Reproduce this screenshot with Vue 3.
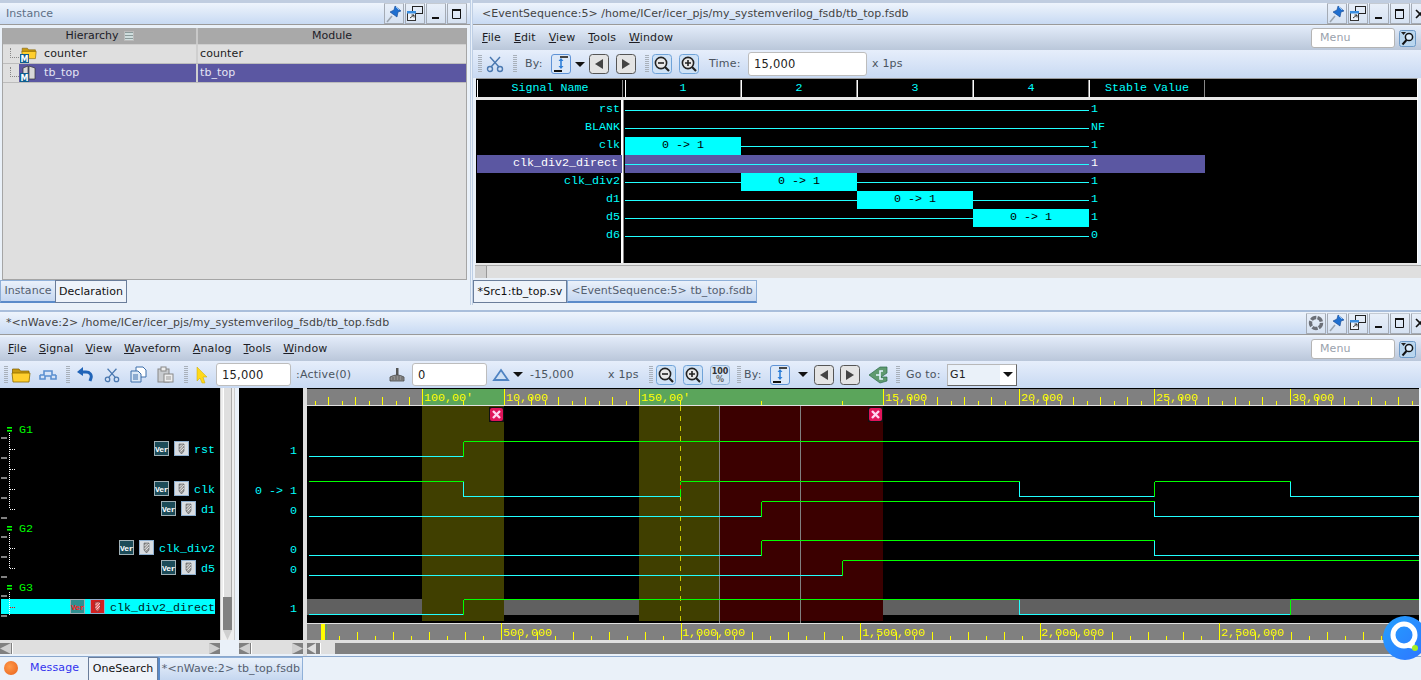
<script setup>
const esRows = [
  { name: 'rst', val: '1', box: -1 },
  { name: 'BLANK', val: 'NF', box: -1 },
  { name: 'clk', val: '1', box: 0 },
  { name: 'clk_div2_direct', val: '1', box: -1, sel: true },
  { name: 'clk_div2', val: '1', box: 1 },
  { name: 'd1', val: '1', box: 2 },
  { name: 'd5', val: '1', box: 3 },
  { name: 'd6', val: '0', box: -1 },
]
const segs = [[-1, 422, 314.5], [504, 639, 517.5], [883, 1019, 896.5], [1019, 1154, 1032.5], [1154, 1290, 1167.5], [1290, 1419, 1303.5]]
const topTicks = []
segs.forEach(([a, b, s]) => {
  let i = 1
  for (let x = s; x < b - 3; x += 13.55, i++) topTicks.push({ x: Math.round(x) + 0.5, h: i % 2 ? 4 : 8 })
})
;[463, 761, 842, 680].forEach(x => topTicks.push({ x: x + 0.5, h: 4 }))
const topMajors = [422, 504, 639, 883, 1019, 1154, 1290]
const topLabels = [[424, "100,00'"], [506, '10,000'], [641, "150,00'"], [885, '15,000'], [1021, '20,000'], [1156, '25,000'], [1292, '30,000']]
const botTicks = []
for (let i = 1; i < 61; i++) {
  const x = Math.round(321.4 + 17.96 * i) + 0.5
  botTicks.push({ x, h: i % 10 === 0 ? 17 : i % 2 ? 4 : 8 })
}
const botLabels = [[503, '500,000'], [682, '1,000,000'], [862, '1,500,000'], [1041, '2,000,000'], [1221, '2,500,000']]
const waves = [
  { hi: 442, lo: 457, start: 0, edges: [463] },
  { hi: 482, lo: 497, start: 1, edges: [463, 680, 1019, 1154, 1290] },
  { hi: 502, lo: 517, start: 0, edges: [761, 1154] },
  { hi: 541, lo: 556, start: 0, edges: [761, 1154] },
  { hi: 561, lo: 576, start: 0, edges: [842] },
  { hi: 600, lo: 615, start: 0, edges: [463, 1019, 1290] },
]
const waveLines = []
waves.forEach(w => {
  let v = w.start
  let x = 309
  ;[...w.edges, 1419].forEach((e, i, arr) => {
    const y = (v ? w.hi : w.lo) + 0.5
    waveLines.push({ x1: x, y1: y, x2: e + 0.5, y2: y, c: v ? '#00ff00' : '#22ffff' })
    if (i < arr.length - 1) {
      waveLines.push({ x1: e + 0.5, y1: w.hi + 0.5, x2: e + 0.5, y2: w.lo + 0.5, c: v ? '#22ffff' : '#00ff00' })
    }
    v = 1 - v
    x = e + 0.5
  })
})
const sideTicks = [438, 458, 478, 498, 518, 537, 557, 577, 596, 616]
const groups = [
  { name: 'G1', y: 430, top: 434, bot: 510, br: [450, 470, 490, 510] },
  { name: 'G2', y: 529, top: 534, bot: 569, br: [549, 569] },
  { name: 'G3', y: 588, top: 593, bot: 616, br: [] },
]
const sigs = [
  { name: 'rst', x: 194, y: 442 },
  { name: 'clk', x: 194, y: 482 },
  { name: 'd1', x: 201, y: 502 },
  { name: 'clk_div2', x: 159, y: 541 },
  { name: 'd5', x: 201, y: 561 },
  { name: 'clk_div2_direct', x: 110, y: 600, sel: true },
]
const vals = [[451, '1'], [491, '0 -> 1'], [511, '0'], [550, '0'], [570, '0'], [609, '1']]
const menuTop = [['F', 'ile'], ['E', 'dit'], ['V', 'iew'], ['T', 'ools'], ['W', 'indow']]
const menuBot = [['F', 'ile'], ['S', 'ignal'], ['V', 'iew'], ['W', 'aveform'], ['A', 'nalog'], ['T', 'ools'], ['W', 'indow']]
</script>

<template>
  <div class="app">
    <svg class="defs" aria-hidden="true">
      <defs>
        <symbol id="pin" viewBox="0 0 20 20">
          <path d="M3 18 L8 12" stroke="#9aa3ad" stroke-width="1.5" fill="none" />
          <path d="M11 2 L17 7 L14 8 L13 13 L6 8 L10 6 Z" fill="#1f6fd0" stroke="#14478f" stroke-width=".6" />
          <path d="M12 3 L15 6" stroke="#8fc0f5" stroke-width="1" />
        </symbol>
        <symbol id="float" viewBox="0 0 20 20">
          <rect x="7.5" y="2.5" width="10" height="7" fill="none" stroke="#222" />
          <rect x="2.5" y="7.5" width="8" height="9" fill="#eef3fa" stroke="#333" />
          <rect x="2" y="7" width="9" height="2.5" fill="#3a8ee0" />
          <path d="M5 14 L9 11 M6.5 11 H9 V13.5" stroke="#333" fill="none" />
        </symbol>
        <symbol id="min" viewBox="0 0 20 20"><rect x="6" y="13" width="7" height="2" fill="#111" /></symbol>
        <symbol id="max" viewBox="0 0 20 20"><path d="M5.5 6.5 H13.5 V14.5 H5.5 Z M5 6.5 H14" fill="none" stroke="#111" /><rect x="5" y="5" width="9" height="2" fill="#111" /></symbol>
        <symbol id="close" viewBox="0 0 20 20"><path d="M5 6 L13 14 M13 6 L5 14" stroke="#111" stroke-width="1.6" /></symbol>
        <symbol id="gear" viewBox="0 0 20 20">
          <circle cx="10" cy="10" r="5.5" fill="none" stroke="#6c7078" stroke-width="3.4" stroke-dasharray="5.5 1.2" />
        </symbol>
        <symbol id="search" viewBox="0 0 17 17">
          <rect x=".5" y=".5" width="16" height="16" rx="2" fill="#b9d6ee" stroke="#6d9ac7" />
          <path d="M2 2 H7 L4.5 5 Z" fill="#222" />
          <circle cx="10" cy="7" r="3.6" fill="#dff0ff" stroke="#111" stroke-width="1.5" />
          <path d="M7.5 10 L3.5 14.5" stroke="#111" stroke-width="2" />
        </symbol>
        <symbol id="scissors" viewBox="0 0 18 18">
          <path d="M4 2 L13 12 M14 2 L5 12" stroke="#4a78b0" stroke-width="1.4" fill="none" />
          <circle cx="4" cy="14" r="2.5" fill="none" stroke="#4a78b0" stroke-width="1.4" />
          <circle cx="14" cy="14" r="2.5" fill="none" stroke="#4a78b0" stroke-width="1.4" />
        </symbol>
        <symbol id="by" viewBox="0 0 20 20">
          <rect x=".5" y=".5" width="19" height="19" rx="2.5" fill="#dce8f8" stroke="#5f93d6" />
          <rect x="9" y="2" width="8" height="2" fill="#444" />
          <rect x="3" y="16" width="8" height="2" fill="#111" />
          <path d="M10 5 V14" stroke="#2f7fd8" stroke-width="1.6" />
          <path d="M7.5 7 L10 4 L12.5 7 Z M7.5 12 L10 15 L12.5 12 Z" fill="#2f7fd8" />
        </symbol>
        <symbol id="prev" viewBox="0 0 20 20">
          <rect x=".5" y=".5" width="19" height="19" rx="3" fill="#e4e4e4" stroke="#555" />
          <path d="M14 5 V15 L6 10 Z" fill="#444" />
        </symbol>
        <symbol id="next" viewBox="0 0 20 20">
          <rect x=".5" y=".5" width="19" height="19" rx="3" fill="#e4e4e4" stroke="#555" />
          <path d="M6 5 V15 L14 10 Z" fill="#444" />
        </symbol>
        <symbol id="zoomout" viewBox="0 0 20 20">
          <rect x=".5" y=".5" width="19" height="19" rx="3" fill="#cfe2f6" stroke="#6fa3d8" />
          <circle cx="9" cy="9" r="5.6" fill="#e9e9e9" stroke="#222" stroke-width="1.6" />
          <path d="M6 9 H12" stroke="#222" stroke-width="1.6" />
          <path d="M13 13 L17 17" stroke="#222" stroke-width="2.2" />
        </symbol>
        <symbol id="zoomin" viewBox="0 0 20 20">
          <rect x=".5" y=".5" width="19" height="19" rx="3" fill="#cfe2f6" stroke="#6fa3d8" />
          <circle cx="9" cy="9" r="5.6" fill="#e9e9e9" stroke="#222" stroke-width="1.6" />
          <path d="M6 9 H12 M9 6 V12" stroke="#222" stroke-width="1.6" />
          <path d="M13 13 L17 17" stroke="#222" stroke-width="2.2" />
        </symbol>
        <symbol id="folder" viewBox="0 0 20 20">
          <path d="M1.5 6 V4 H8 L9.5 6 H18 V9 H1.5 Z" fill="#c99a10" stroke="#7a5a00" stroke-width=".7" />
          <path d="M1 8 H19 L18 17 H2 Z" fill="#ffcf2e" stroke="#8a6a00" stroke-width=".8" />
        </symbol>
        <symbol id="cable" viewBox="0 0 18 18">
          <path d="M1 9 H5 V5 H13 V9 H17 M1 9 V13 H6 V10 H12 V13 H17 V9" fill="none" stroke="#5a8fd0" stroke-width="1.6" />
        </symbol>
        <symbol id="undo" viewBox="0 0 16 16">
          <path d="M3 5 H9 C13 5 15 8 14 11 L13 14" fill="none" stroke="#2064b8" stroke-width="3" />
          <path d="M6 0 L0 5 L6 9 Z" fill="#2064b8" />
        </symbol>
        <symbol id="copy" viewBox="0 0 17 17">
          <path d="M6 1 H13 L16 4 V11 H6 Z" fill="#fff" stroke="#3d6faa" />
          <path d="M1 5 H8 L11 8 V16 H1 Z" fill="#dbe8f6" stroke="#3d6faa" />
          <path d="M3 9 H8 M3 11 H8 M3 13 H8" stroke="#3d6faa" />
        </symbol>
        <symbol id="paste" viewBox="0 0 17 17">
          <rect x="1" y="3" width="11" height="13" fill="#c9ccd0" stroke="#888" />
          <rect x="4" y="1" width="5" height="4" fill="#eee" stroke="#888" />
          <rect x="7" y="8" width="9" height="8" fill="#eee" stroke="#888" />
          <path d="M9 11 H14 M9 13 H14" stroke="#999" />
        </symbol>
        <symbol id="pointer" viewBox="0 0 12 18">
          <path d="M1 1 L11 11 L7 11 L9 17 L6 17 L4 12 L1 15 Z" fill="#ffd91a" stroke="#c9a800" stroke-width=".5" />
        </symbol>
        <symbol id="hand" viewBox="0 0 16 16">
          <rect x="7" y="1" width="2.5" height="7" fill="#555" />
          <path d="M1 14 V10 Q8 6 15 10 V14 Z" fill="#8f8f8f" stroke="#444" stroke-width=".8" />
          <path d="M4 10 V13 M7 9 V13 M10 9 V13 M13 10 V13" stroke="#444" stroke-width=".6" />
        </symbol>
        <symbol id="tri" viewBox="0 0 18 14">
          <path d="M9 2 L16 12 H2 Z" fill="#cfe0f4" stroke="#4f83c2" stroke-width="1.8" />
        </symbol>
        <symbol id="pct" viewBox="0 0 20 20">
          <rect x=".5" y=".5" width="19" height="19" rx="3" fill="#d3e3f5" stroke="#8fb2d8" />
          <text x="10" y="9" text-anchor="middle" font-size="8" font-weight="700" fill="#333" font-family="'DejaVu Sans',sans-serif">100</text>
          <text x="10" y="17" text-anchor="middle" font-size="8" font-weight="700" fill="#666" font-family="'DejaVu Sans',sans-serif">%</text>
        </symbol>
        <symbol id="chev" viewBox="0 0 20 20">
          <path d="M1 10 L12 2 L19 2 L19 8 L13 12 L19 12 L19 16 L12 18 Z" fill="#5f9a6f" stroke="#2c6b4a" stroke-width=".7" />
          <path d="M8 10 H12 V6 H15 M12 10 V14 H15" stroke="#e4f4ff" stroke-width="1.6" fill="none" />
        </symbol>
      </defs>
    </svg>

    <div class="top">
      <section class="left">
        <div class="title">
          <span class="title-text muted">Instance</span>
          <div class="wbtns">
            <button class="wbtn"><svg class="i20"><use href="#pin" /></svg></button>
            <button class="wbtn"><svg class="i20"><use href="#float" /></svg></button>
            <button class="wbtn"><svg class="i20"><use href="#min" /></svg></button>
            <button class="wbtn"><svg class="i20"><use href="#max" /></svg></button>
          </div>
        </div>
        <div class="tree">
          <div class="tree-head">
            <div class="th th1">Hierarchy <span class="th-ico"></span></div>
            <div class="th th2">Module</div>
          </div>
          <div class="tr">
            <div class="td td1">
              <span class="dots"></span>
              <svg class="mico" viewBox="0 0 17 17">
                <use href="#folder" x="1" y="-1" width="16" height="16" />
                <rect x="0" y="8" width="9" height="9" fill="#0f5e8f" />
                <text x="4.5" y="15.5" text-anchor="middle" font-size="8" font-weight="700" fill="#fff" font-family="'DejaVu Sans',sans-serif">M</text>
              </svg>
              <span class="tname">counter</span>
            </div>
            <div class="td td2">counter</div>
          </div>
          <div class="tr tr-sel">
            <div class="td td1">
              <span class="dots"></span>
              <span class="sel-fill">
                <svg class="mico" viewBox="0 0 17 17">
                  <path d="M3 3 L8 1 L8 14 L3 15 Z M9 1 L15 3 V14 L9 14 Z" fill="#d8d8d8" stroke="#333" stroke-width=".7" />
                  <rect x="0" y="8" width="9" height="9" fill="#0f5e8f" />
                  <text x="4.5" y="15.5" text-anchor="middle" font-size="8" font-weight="700" fill="#fff" font-family="'DejaVu Sans',sans-serif">M</text>
                </svg>
                <span class="tname">tb_top</span>
              </span>
            </div>
            <div class="td td2">tb_top</div>
          </div>
        </div>
        <div class="tabs">
          <span class="tab tab-blue tab-inst">Instance</span>
          <span class="tab tab-white tab-decl">Declaration</span>
        </div>
      </section>

      <div class="vsep"></div>

      <section class="right">
        <div class="title">
          <span class="title-text title-path">&lt;EventSequence:5&gt; /home/ICer/icer_pjs/my_systemverilog_fsdb/tb_top.fsdb</span>
          <div class="wbtns">
            <button class="wbtn"><svg class="i20"><use href="#pin" /></svg></button>
            <button class="wbtn"><svg class="i20"><use href="#float" /></svg></button>
            <button class="wbtn"><svg class="i20"><use href="#min" /></svg></button>
            <button class="wbtn"><svg class="i20"><use href="#max" /></svg></button>
            <button class="wbtn wbtn-cut"><svg class="i20"><use href="#close" /></svg></button>
          </div>
        </div>
        <div class="menu menu-top">
          <span v-for="m in menuTop" :key="m[1]" class="mi"><u>{{ m[0] }}</u>{{ m[1] }}</span>
          <span class="menu-search">Menu</span>
          <svg class="i17 search-ico"><use href="#search" /></svg>
        </div>
        <div class="tool">
          <span class="grip ml5"></span>
          <svg class="i18 ml4"><use href="#scissors" /></svg>
          <span class="grip ml9"></span>
          <span class="tl ml8 w26">By:</span>
          <svg class="i20"><use href="#by" /></svg>
          <span class="drop ml4"></span>
          <svg class="i20 ml4"><use href="#prev" /></svg>
          <svg class="i20 ml7"><use href="#next" /></svg>
          <span class="grip ml9"></span>
          <svg class="i20 ml3"><use href="#zoomout" /></svg>
          <svg class="i20 ml7"><use href="#zoomin" /></svg>
          <span class="tl ml10 w39">Time:</span>
          <span class="inp w119">15,000</span>
          <span class="tl ml5">x 1ps</span>
        </div>
        <div class="es">
          <div class="es-head">
            <span class="hc hc-name">Signal Name</span>
            <span class="hc hc-num">1</span>
            <span class="hc hc-num">2</span>
            <span class="hc hc-num">3</span>
            <span class="hc hc-num">4</span>
            <span class="hc hc-num">Stable Value</span>
          </div>
          <div class="es-body">
            <div v-for="r in esRows" :key="r.name" class="es-row" :class="{ sel: r.sel }">
              <span class="es-name">{{ r.name }}</span>
              <span class="es-wave">
                <span v-for="c in 4" :key="c" class="es-cell" :class="{ box: r.box === c - 1 }">
                  <template v-if="r.box === c - 1">0 -&gt; 1</template>
                </span>
              </span>
              <span class="es-val">{{ r.val }}</span>
            </div>
          </div>
        </div>
        <div class="hbar"><span class="harrow"></span></div>
        <div class="tabs tabs-right">
          <span class="tab tab-white tab-src">*Src1:tb_top.sv</span>
          <span class="tab tab-blue tab-es">&lt;EventSequence:5&gt; tb_top.fsdb</span>
        </div>
      </section>
    </div>

    <div class="hsep"></div>

    <section class="bottom">
      <div class="title title-b">
        <span class="title-text title-b-text">*&lt;nWave:2&gt; /home/ICer/icer_pjs/my_systemverilog_fsdb/tb_top.fsdb</span>
        <div class="wbtns">
          <button class="wbtn"><svg class="i20"><use href="#gear" /></svg></button>
          <button class="wbtn"><svg class="i20"><use href="#pin" /></svg></button>
          <button class="wbtn"><svg class="i20"><use href="#float" /></svg></button>
          <button class="wbtn"><svg class="i20"><use href="#min" /></svg></button>
          <button class="wbtn"><svg class="i20"><use href="#max" /></svg></button>
          <button class="wbtn wbtn-cut"><svg class="i20"><use href="#close" /></svg></button>
        </div>
      </div>
      <div class="menu menu-bot">
        <span v-for="m in menuBot" :key="m[1]" class="mi"><u>{{ m[0] }}</u>{{ m[1] }}</span>
        <span class="menu-search">Menu</span>
        <svg class="i17 search-ico"><use href="#search" /></svg>
      </div>
      <div class="tool tool-b">
        <span class="grip ml4"></span>
        <svg class="i20 ml3"><use href="#folder" /></svg>
        <svg class="i18 ml8"><use href="#cable" /></svg>
        <span class="grip ml9"></span>
        <svg class="i16 ml7"><use href="#undo" /></svg>
        <svg class="i16 ml11"><use href="#scissors" /></svg>
        <svg class="i17 ml10"><use href="#copy" /></svg>
        <svg class="i17 ml10"><use href="#paste" /></svg>
        <span class="grip ml10"></span>
        <svg class="ptr ml8"><use href="#pointer" /></svg>
        <span class="inp w75 ml8">15,000</span>
        <span class="tl ml5 w93">:Active(0)</span>
        <svg class="i16"><use href="#hand" /></svg>
        <span class="inp w75 ml7">0</span>
        <svg class="i18 ml5"><use href="#tri" /></svg>
        <span class="drop ml3"></span>
        <span class="tl ml7 w78">-15,000</span>
        <span class="tl w41">x 1ps</span>
        <span class="grip"></span>
        <svg class="i20 ml3"><use href="#zoomout" /></svg>
        <svg class="i20 ml7"><use href="#zoomin" /></svg>
        <svg class="i20 ml7"><use href="#pct" /></svg>
        <span class="grip ml7"></span>
        <span class="tl ml3 w26">By:</span>
        <svg class="i20"><use href="#by" /></svg>
        <span class="drop ml8"></span>
        <svg class="i20 ml6"><use href="#prev" /></svg>
        <svg class="i20 ml6"><use href="#next" /></svg>
        <svg class="i20 ml8"><use href="#chev" /></svg>
        <span class="grip ml8"></span>
        <span class="tl ml6 w41">Go to:</span>
        <span class="select">G1<span class="sel-arrow"><span class="drop"></span></span></span>
      </div>

      <div class="wavearea">
        <div class="col-names">
          <svg class="cv" width="220" height="252" viewBox="0 389 220 252">
            <rect x="0" y="389" width="220" height="252" fill="#000" />
            <rect v-for="y in sideTicks" :key="y" x="1" :y="y" width="6" height="2" fill="#808080" />
            <g v-for="g in groups" :key="g.name">
              <rect x="7" :y="g.y - 2" width="5" height="1.6" fill="#0f0" />
              <rect x="7" :y="g.y + 1" width="5" height="1.6" fill="#0f0" />
              <text class="mono" x="19" :y="g.y + 4" fill="#00ff00">{{ g.name }}</text>
              <line x1="9.5" :y1="g.top" x2="9.5" :y2="g.bot" stroke="#fff" stroke-dasharray="1 1" />
              <line v-for="b in g.br" :key="b" x1="10" :y1="b + .5" x2="16" :y2="b + .5" stroke="#fff" stroke-dasharray="1 1" />
            </g>
            <rect x="1" y="600" width="214" height="15" fill="#00ffff" />
            <line x1="9.5" y1="593" x2="9.5" y2="616" stroke="#fff" stroke-dasharray="1 1" />
            <line x1="10" y1="608.5" x2="16" y2="608.5" stroke="#f00" stroke-dasharray="1 1" />
            <g v-for="s in sigs" :key="s.name" :transform="`translate(${s.x - 40} ${s.y})`">
              <rect x=".5" y=".5" width="14" height="14" :fill="s.sel ? '#2f8f8f' : '#1c4b58'" stroke="#9fb0b6" />
              <text class="ver" x="7.5" y="10.5" :fill="s.sel ? '#ff2020' : '#fff'">Ver</text>
              <g transform="translate(20 0)">
                <rect x=".5" y=".5" width="14" height="14" :fill="s.sel ? '#d42020' : '#d8dde2'" stroke="#8fb0d0" />
                <path d="M5 3 H10 L10 10 L7.5 13 L5 10 Z" :fill="s.sel ? '#e86060' : '#9a9a9a'" stroke="#444" stroke-width=".5" />
                <path d="M5.5 9 L10 4 M5.5 6 L8 3.5 M6.5 10.5 L10 7" stroke="#fff" stroke-width=".7" />
              </g>
              <text class="mono" x="40" y="12" :fill="s.sel ? '#001a1a' : '#00ffff'">{{ s.name }}</text>
            </g>
          </svg>
          <div class="lightgap"></div>
          <div class="hs"><span class="hs-a"></span><span class="hs-t hs-t1"></span><span class="hs-b"></span></div>
        </div>

        <div class="vscroll">
          <div class="vs-thumb"></div>
          <div class="vs-track"></div>
          <div class="vs-down"></div>
        </div>

        <div class="col-vals">
          <svg class="cv" width="64" height="252" viewBox="239 389 64 252">
            <rect x="239" y="389" width="64" height="252" fill="#000" />
            <text v-for="v in vals" :key="v[0]" class="mono" x="297" :y="v[0] + 4" text-anchor="end" fill="#00ffff">{{ v[1] }}</text>
          </svg>
          <div class="lightgap"></div>
          <div class="hs"><span class="hs-a"></span><span class="hs-t hs-t2"></span><span class="hs-b"></span></div>
        </div>

        <div class="col-sep"></div>

        <div class="col-wave">
          <svg class="cv" width="1112" height="252" viewBox="307 389 1112 252">
            <rect x="307" y="389" width="1112" height="252" fill="#000" />
            <!-- top ruler -->
            <rect x="307" y="390" width="1112" height="16" fill="#808080" />
            <rect x="422" y="390" width="82" height="16" fill="#5ba55b" />
            <rect x="639" y="390" width="244" height="16" fill="#5ba55b" />
            <rect x="307" y="406" width="1112" height="1" fill="#e0e0e0" />
            <rect v-for="(t, i) in topTicks" :key="'t' + i" :x="t.x - .5" :y="406 - t.h" width="1" :height="t.h" fill="#ffff00" />
            <rect v-for="x in topMajors" :key="x" :x="x" y="390" width="1" height="16" fill="#ffff00" />
            <text v-for="l in topLabels" :key="l[1]" class="mono" :x="l[0]" y="402" fill="#ffff00">{{ l[1] }}</text>
            <!-- selected band -->
            <rect x="307" y="600" width="1112" height="16" fill="#606060" />
            <!-- time ranges -->
            <rect x="422" y="407" width="82" height="215" fill="#403f00" />
            <rect x="639" y="407" width="81" height="215" fill="#403f00" />
            <rect x="720" y="407" width="163" height="215" fill="#3b0000" />
            <rect x="719" y="407" width="1" height="217" fill="#808080" />
            <rect x="800" y="407" width="1" height="217" fill="#808080" />
            <line x1="680.5" y1="407" x2="680.5" y2="622" stroke="#c8c800" stroke-dasharray="5 5" />
            <!-- waves -->
            <line v-for="(l, i) in waveLines" :key="'w' + i" :x1="l.x1" :y1="l.y1" :x2="l.x2" :y2="l.y2" :stroke="l.c" shape-rendering="crispEdges" />
            <rect x="680" y="486" width="1" height="4" fill="#ff0000" />
            <!-- markers -->
            <g v-for="x in [489, 868]" :key="x" :transform="`translate(${x} 408)`">
              <rect width="15" height="15" fill="#111" />
              <rect x="1" y="1" width="13" height="13" rx="2" fill="#e0145a" />
              <path d="M4 4 L11 11 M11 4 L4 11" stroke="#ffd4f0" stroke-width="2.4" />
            </g>
            <!-- bottom ruler -->
            <rect x="307" y="624" width="1112" height="17" fill="#808080" />
            <rect x="307" y="624" width="1112" height="1" fill="#e0e0e0" />
            <rect v-for="(t, i) in botTicks" :key="'b' + i" :x="t.x - .5" :y="641 - t.h" width="1" :height="t.h" fill="#ffff00" />
            <text v-for="l in botLabels" :key="l[1]" class="mono" :x="l[0]" y="637" fill="#ffff00">{{ l[1] }}</text>
            <rect x="321" y="625" width="4" height="16" fill="#ffff00" />
            <rect x="326" y="625" width="1" height="16" fill="#5ba55b" />
          </svg>
          <div class="lightgap"></div>
          <div class="wave-hs"><span class="hs-a2"></span><span class="hs-t3"></span></div>
        </div>
      </div>
    </section>

    <div class="status">
      <span class="st-logo"></span>
      <span class="st-msg">Message</span>
      <span class="tab tab-white tab-one">OneSearch</span>
      <span class="tab tab-blue tab-nw">*&lt;nWave:2&gt; tb_top.fsdb</span>
    </div>

    <svg class="qlogo" width="44" height="44" viewBox="0 0 44 44">
      <defs>
        <linearGradient id="qg" x1="0" y1="0" x2="1" y2="1">
          <stop offset="0" stop-color="#23a0ff" />
          <stop offset="1" stop-color="#2f74ff" />
        </linearGradient>
      </defs>
      <circle cx="22" cy="22" r="22" fill="url(#qg)" />
      <circle cx="21" cy="19" r="11" fill="none" stroke="#fff" stroke-width="5" />
      <path d="M21 31 Q29 31 32 26 L31 33 Z" fill="#fff" />
      <circle cx="32" cy="32" r="3" fill="#a5f020" />
    </svg>
  </div>
</template>

<style>
html, body { margin: 0; padding: 0; background: #eaf1f9; overflow: hidden; }
</style>

<style scoped>
.app {
  width: 1421px; height: 680px; position: relative; overflow: hidden;
  display: flex; flex-direction: column;
  background: #eaf1f9;
  font: 11px/14px "DejaVu Sans", sans-serif;
  color: #222;
}
.defs { position: absolute; width: 0; height: 0; }
.top { display: flex; height: 305px; flex: none; }
.left { width: 470px; flex: none; display: flex; flex-direction: column; border-top: 3px solid #c0cde0; box-sizing: border-box; }
.vsep { width: 3px; flex: none; background: linear-gradient(90deg, #a9bedb, #eaf1f9 50%, #a9bedb); }
.right { flex: 1; min-width: 0; display: flex; flex-direction: column; border-top: 3px solid #c0cde0; box-sizing: border-box; }
.hsep { height: 7px; flex: none; background: #eaf1f9; border-bottom: 2px solid #a9bedb; box-sizing: border-box; }
.bottom { flex: none; display: flex; flex-direction: column; }

.title {
  height: 22px; flex: none; display: flex; align-items: center; justify-content: space-between;
  background: linear-gradient(#eef4fc, #c8daf3);
  border-bottom: 1px solid #9a9a9a; box-sizing: border-box;
}
.title-b { height: 23px; }
.title-text { padding-left: 6px; color: #555; white-space: nowrap; letter-spacing: .05px; }
.title-path { padding-left: 9px; color: #444; }
.title-b-text { padding-left: 6px; color: #444; }
.muted { color: #5d6f86; }
.wbtns { display: flex; gap: 1px; padding-right: 3px; }
.right .wbtns, .bottom .wbtns { padding-right: 0; margin-right: -10px; }
.wbtn {
  width: 20px; height: 21px; padding: 0; margin: 0; display: flex; align-items: center; justify-content: center;
  background: linear-gradient(#e8eff9, #d6e2f2); border: 1px solid #a4abb5; border-top-color: #c4cad2; box-sizing: border-box; border-radius: 1px;
}
.i20 { width: 20px; height: 20px; flex: none; display: block; }
.i18 { width: 18px; height: 18px; flex: none; display: block; }
.i17 { width: 17px; height: 17px; flex: none; display: block; }
.i16 { width: 16px; height: 16px; flex: none; display: block; }
.ptr { width: 12px; height: 18px; flex: none; display: block; }

.tree { height: 252px; flex: none; margin: 3px 3px 0 2px; background: #dfdfdf; border: 1px solid #a5a5a5; border-top: 0; box-sizing: border-box; }
.tree-head { display: flex; height: 17px; background: #a9a9a9; border-bottom: 1px solid #cfcfcf; box-sizing: border-box; }
.th { display: flex; align-items: center; justify-content: center; gap: 5px; color: #1c1c28; }
.th1 { width: 195px; border-right: 2px solid #c8c8c8; box-sizing: border-box; }
.th2 { flex: 1; }
.th-ico { width: 8px; height: 8px; background: repeating-linear-gradient(#8a9a9a 0 1px, #cfdede 1px 3px); border: 1px solid #bbb; }
.tr { display: flex; height: 18px; align-items: center; border-bottom: 1px solid #bcbcbc; box-sizing: content-box; }
.td { display: flex; align-items: center; height: 18px; color: #1c1c1c; letter-spacing: .1px; }
.td1 { width: 195px; box-sizing: border-box; border-right: 2px solid #cfcfcf; flex: none; }
.td2 { flex: 1; padding-left: 2px; }
.dots { width: 8px; height: 9px; margin: -3px 0 0 7px; border-left: 1px dotted #888; border-bottom: 1px dotted #888; flex: none; }
.mico { width: 17px; height: 17px; margin-left: 1px; flex: none; }
.tname { margin-left: 7px; }
.tr-sel .td2 { background: #5b57a2; color: #e4e4f4; }
.sel-fill { display: flex; align-items: center; background: #5b57a2; color: #e4e4f4; height: 18px; flex: 1; }

.tabs { flex: 1; display: flex; align-items: flex-start; }
.tab {
  height: 23px; line-height: 22px; display: flex; align-items: center; justify-content: center;
  box-sizing: border-box; white-space: nowrap; letter-spacing: .05px;
}
.tab-blue {
  color: #555f70; background: linear-gradient(#eaf1fa, #c5d7f0);
  border: 1px solid #8fb0d8; border-bottom: 2px solid #5b8bc9;
}
.tab-white { color: #111; background: #eef3fa; border: 1px solid #6a7d9a; }
.tab-inst { width: 56px; }
.tab-decl { width: 72px; margin-left: -1px; }
.tab-src { width: 94px; }
.tab-es { width: 190px; }

.menu {
  height: 24px; flex: none; display: flex; align-items: center; gap: 13px; padding-left: 9px; margin-top: 1px;
  background: linear-gradient(#e2ebf9, #bac7da); letter-spacing: .12px;
}
.menu-bot { padding-left: 8px; gap: 12px; margin-top: 2px; }
.mi { color: #1c1c24; }
.menu-search {
  margin-left: auto; width: 84px; height: 20px; line-height: 18px; padding-left: 8px; box-sizing: border-box;
  background: #fff; border: 1px solid #b4b4b4; border-radius: 3px; color: #9aa2ac;
}
.menu-top .menu-search { margin-right: -9px; }
.menu-bot .menu-search { margin-right: -8px; }
.search-ico { margin-right: 5px; }

.tool {
  height: 28px; flex: none; display: flex; align-items: center;
  background: linear-gradient(#e6eefb, #c8d9f2);
}
.tool-b { height: 27px; }
.tl { color: #4a5460; white-space: nowrap; letter-spacing: .2px; flex: none; }
.grip { width: 4px; height: 18px; flex: none; background: repeating-linear-gradient(#a8b0ba 0 1px, transparent 1px 2px); }
.drop { width: 0; height: 0; border: 5px solid transparent; border-top: 5px solid #111; border-bottom: 0; flex: none; display: block; }
.inp {
  height: 24px; line-height: 20px; padding-left: 5px; box-sizing: border-box; flex: none;
  background: #fff; border: 1px solid #bdbdbd; border-radius: 3px; color: #222; letter-spacing: .2px; font-size: 11.5px;
  display: flex; align-items: center;
}
.tool-b .inp { height: 23px; }
.select {
  width: 70px; height: 22px; margin-left: 0; flex: none; padding-left: 2px; box-sizing: border-box;
  display: flex; align-items: center; justify-content: space-between;
  background: #eaf1f9; border: 1px solid #b8b8b8; border-right-color: #666; border-bottom-color: #666; letter-spacing: .3px;
}
.sel-arrow { width: 16px; height: 20px; background: #fff; display: flex; align-items: center; justify-content: center; }
.ml3 { margin-left: 3px; } .ml4 { margin-left: 4px; } .ml5 { margin-left: 5px; } .ml6 { margin-left: 6px; }
.ml7 { margin-left: 7px; } .ml8 { margin-left: 8px; } .ml9 { margin-left: 9px; } .ml10 { margin-left: 10px; } .ml11 { margin-left: 11px; }
.w26 { width: 26px; } .w39 { width: 39px; } .w41 { width: 41px; } .w75 { width: 75px; } .w78 { width: 78px; } .w93 { width: 93px; } .w119 { width: 119px; }

.es {
  height: 187px; flex: none; margin-left: 3px; margin-right: 3px; background: #000;
  border-top: 1px solid #999; border-right: 1px solid #fff; border-bottom: 2px solid #e6e6e6; box-sizing: border-box;
  font: 11.67px/16px "Liberation Mono", monospace; color: #00ffff;
  display: flex; flex-direction: column;
}
.es-head { height: 21px; flex: none; display: flex; padding-left: 1px; padding-top: 1px; box-sizing: border-box; border-bottom: 3px solid #e8e8e8; }
.hc { text-align: center; height: 17px; box-sizing: border-box; border: 1px solid; border-color: #fff #888 #888 #fff; border-top: 0; border-bottom: 0; }
.hc-name { width: 146px; margin-right: 2px; }
.hc-num { width: 116px; }
.es-body {
  flex: 1; padding-top: 1px;
  background: linear-gradient(90deg, #000 145px, #fff 145px, #fff 147px, #888 147px, #888 148px, #000 148px);
}
.es-row { display: flex; height: 18px; }
.es-name { width: 143px; padding-right: 2px; margin-left: 1px; box-sizing: content-box; text-align: right; flex: none; }
.es-wave { display: flex; margin-left: 3px; }
.es-cell { width: 116px; height: 18px; position: relative; text-align: center; }
.es-cell:not(.box)::after { content: ""; position: absolute; left: 0; right: 0; top: 9px; height: 1px; background: #22ffff; }
.es-cell.box { background: #00ffff; color: #000; }
.es-val { width: 116px; padding-left: 2px; box-sizing: border-box; }
.es-row.sel .es-name, .es-row.sel .es-wave, .es-row.sel .es-val { background: #5b57a2; color: #fff; }
.es-row.sel .es-name { width: 141px; padding-right: 4px; }

.hbar { height: 13px; flex: none; margin-left: 2px; background: #dfdfdf; border-top: 1px solid #aaa; display: flex; box-sizing: border-box; }
.harrow { width: 11px; height: 12px; background: #cfcfcf; border-right: 1px solid #999; }
.tabs-right { padding-top: 2px; }

.wavearea { display: flex; height: 268px; flex: none; font: 11.67px "Liberation Mono", monospace; }
.cv { display: block; }
.mono { font: 11.67px "Liberation Mono", monospace; }
.ver { font: 700 8px "Liberation Mono", monospace; text-anchor: middle; letter-spacing: -.5px; }
.col-names { width: 220px; flex: none; }
.col-vals { width: 64px; flex: none; margin-left: 4px; }
.col-sep { width: 4px; flex: none; background: #dfdfdf; }
.col-wave { width: 1112px; flex: none; }
.lightgap { height: 3px; background: #dfdfdf; }
.hs { height: 11px; background: #808080; display: flex; align-items: stretch; justify-content: space-between; }
.hs-a, .hs-b { width: 11px; background: #cfcfcf; clip-path: polygon(100% 0, 0 50%, 100% 100%); }
.hs-b { clip-path: polygon(0 0, 100% 50%, 0 100%); }
.hs-t { background: #dfdfdf; border-left: 1px solid #fff; }
.hs-t1 { width: 196px; }
.hs-t2 { width: 40px; }
.vscroll {
  width: 15px; flex: none; display: flex; flex-direction: column; padding: 0 2px; box-sizing: border-box; background: #eeeeee; height: 252px;
  border-right: 1px solid #ccc; border-left: 1px solid #ccc;
}
.vs-thumb { height: 209px; background: #dfdfdf; border-left: 1px solid #fff; border-right: 1px solid #aaa; }
.vs-track { flex: 1; background: #808080; }
.vs-down { height: 10px; background: #cfcfcf; clip-path: polygon(0 0, 100% 0, 50% 100%); }
.wave-hs { height: 11px; background: #808080; display: flex; gap: 4px; }
.hs-a2 { width: 9px; background: #dfdfdf; clip-path: polygon(100% 0, 0 50%, 100% 100%); }
.hs-t3 { width: 14px; background: #dfdfdf; border-left: 1px solid #fff; }

.status {
  flex: 1; display: flex; align-items: flex-start; border-top: 1px solid #8aa7cc; margin-top: 0;
  padding-left: 4px; background: #eaf1f9;
}
.st-logo { width: 14px; height: 14px; margin-top: 4px; border-radius: 50%; background: radial-gradient(circle at 40% 40%, #ff9a4a, #e8601a); flex: none; }
.st-msg { margin-left: 12px; margin-top: 4px; color: #3333ee; width: 58px; letter-spacing: .15px; flex: none; }
.tab-one { width: 70px; height: 23px; border-bottom: 0; }
.tab-nw { width: 145px; height: 23px; border-bottom: 0; border-left: 2px solid #5b8bc9; }

.qlogo { position: absolute; left: 1383px; top: 616px; }
</style>
